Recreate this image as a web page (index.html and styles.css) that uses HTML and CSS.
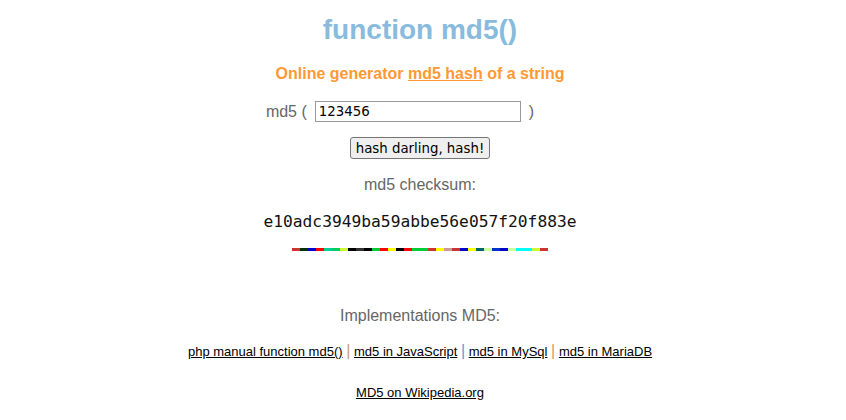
FILE: index.html
```html
<!DOCTYPE html>
<html>
<head>
<meta charset="utf-8">
<title>function md5()</title>
<link rel="stylesheet" href="styles.css">
</head>
<body>
<div class="page">
  <h1 class="title">function md5()</h1>
  <h2 class="subtitle">Online generator <a href="#" class="sub-link">md5 hash</a> of a string</h2>
  <form class="form">
    <div class="input-row">
      <span class="paren">md5 (</span>
      <input class="text-input" type="text" value="123456">
      <span class="paren">)</span>
    </div>
    <div class="button-row">
      <button type="button" class="hash-btn">hash darling, hash!</button>
    </div>
  </form>
  <div class="label">md5 checksum:</div>
  <div class="hash">e10adc3949ba59abbe56e057f20f883e</div>
  <div class="bar">
    <span style="background:#cc3333"></span><span style="background:#003300"></span><span style="background:#0000cc"></span><span style="background:#ff0000"></span><span style="background:#00cc99"></span><span style="background:#00cc66"></span><span style="background:#ccff33"></span><span style="background:#000000"></span><span style="background:#333333"></span><span style="background:#000000"></span><span style="background:#00cc33"></span><span style="background:#ff0000"></span><span style="background:#ffff00"></span><span style="background:#000000"></span><span style="background:#ff0000"></span><span style="background:#00cc33"></span><span style="background:#00cc33"></span><span style="background:#cc3333"></span><span style="background:#ffff00"></span><span style="background:#cc9999"></span><span style="background:#cc3333"></span><span style="background:#0000cc"></span><span style="background:#ffff00"></span><span style="background:#006666"></span><span style="background:#ccff99"></span><span style="background:#0033cc"></span><span style="background:#0000cc"></span><span style="background:#ccff99"></span><span style="background:#00ffff"></span><span style="background:#00ffff"></span><span style="background:#ccff33"></span><span style="background:#cc3333"></span>
  </div>
  <div class="label impl">Implementations MD5:</div>
  <div class="links">
    <a href="#">php manual function md5()</a>
    <span class="sep sep-tan">|</span>
    <a href="#">md5 in JavaScript</a>
    <span class="sep sep-blue">|</span>
    <a href="#">md5 in MySql</a>
    <span class="sep sep-orange">|</span>
    <a href="#">md5 in MariaDB</a>
  </div>
  <div class="links wiki">
    <a href="#">MD5 on Wikipedia.org</a>
  </div>
</div>
</body>
</html>
```

FILE: styles.css
```css
html, body {
  margin: 0;
  padding: 0;
  background: #ffffff;
}

body {
  font-family: "Liberation Sans", Arial, sans-serif;
  color: #666666;
}

.page {
  display: flex;
  flex-direction: column;
  align-items: center;
  text-align: center;
  margin-right: 6px;
}

.title {
  margin: 14px 0 0 0;
  font-size: 28px;
  line-height: 32px;
  font-weight: bold;
  color: #88bbdd;
}

.subtitle {
  margin: 19px 0 0 0;
  font-size: 16px;
  line-height: 18px;
  font-weight: bold;
  color: #ff9933;
}

.sub-link {
  color: #ff9933;
  text-decoration: underline;
}

.form {
  margin: 18px 0 0 0;
  display: flex;
  flex-direction: column;
  align-items: center;
}

.input-row {
  display: flex;
  align-items: center;
  gap: 8px;
  margin-right: 40px;
}

.paren {
  font-size: 16px;
  color: #666666;
}

.text-input {
  box-sizing: border-box;
  width: 206px;
  height: 21px;
  border: 1px solid #999999;
  padding: 1px 3px;
  font-family: "DejaVu Sans", sans-serif;
  font-size: 13.33px;
  color: #000000;
  margin: 0;
}

.button-row {
  margin-top: 15px;
}

.hash-btn {
  box-sizing: border-box;
  width: 140px;
  height: 22px;
  font-family: "DejaVu Sans", sans-serif;
  font-size: 13.33px;
  color: #000000;
  background: #efefef;
  border: 1px solid #767676;
  border-radius: 3px;
  padding: 1px 4px;
  margin: 0;
}

.label {
  margin-top: 17px;
  font-size: 16px;
  line-height: 18px;
  color: #666666;
}

.hash {
  margin-top: 18px;
  font-family: "DejaVu Sans Mono", monospace;
  font-size: 16.25px;
  line-height: 20px;
  color: #111111;
}

.bar {
  margin-top: 16px;
  display: flex;
  height: 3px;
}

.bar span {
  display: block;
  width: 8px;
  height: 3px;
}

.impl {
  margin-top: 56px;
}

.links {
  margin-top: 18px;
  font-size: 13px;
  line-height: 16px;
  color: #000000;
}

.links a {
  color: #000000;
  text-decoration: underline;
}

.sep {
  font-size: 16px;
}

.sep-tan {
  color: #cc9966;
}

.sep-blue {
  color: #6699cc;
}

.sep-orange {
  color: #cc9966;
}

.wiki {
  margin-top: 25px;
}
```
